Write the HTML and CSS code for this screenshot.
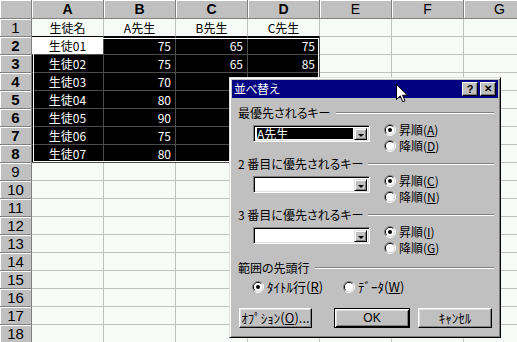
FILE: index.html
```html
<!DOCTYPE html>
<html lang="ja">
<head>
    <meta charset="UTF-8">
    <title>並べ替え</title>
    <link rel="stylesheet" href="styles.css">
</head>
<body>

<svg width="0" height="0" style="position:absolute">
    <symbol id="radio" viewBox="0 0 12 12">
        <path d="M2.1 9.9A5.5 5.5 0 0 1 9.9 2.1" fill="none" stroke="#808080"/>
        <path d="M9.9 2.1A5.5 5.5 0 0 1 2.1 9.9" fill="none" stroke="#fff"/>
        <path d="M2.8 9.2A4.5 4.5 0 0 1 9.2 2.8" fill="none" stroke="#000"/>
        <path d="M9.2 2.8A4.5 4.5 0 0 1 2.8 9.2" fill="none" stroke="#dfdfdf"/>
        <circle cx="6" cy="6" r="4" fill="#fff"/>
    </symbol>
    <symbol id="radio-on" viewBox="0 0 12 12">
        <use href="#radio"/>
        <circle cx="6" cy="6" r="2" fill="#000"/>
    </symbol>
</svg>

<div class="sheet">
    <div class="grid">
        <div class="head"></div><div class="head on">A</div><div class="head on">B</div><div class="head on">C</div><div class="head on">D</div><div class="head">E</div><div class="head">F</div><div class="head">G</div>

        <div class="head rh">1</div><div class="cell c top">生徒名</div><div class="cell c top">A先生</div><div class="cell c top">B先生</div><div class="cell c top">C先生</div><div class="cell"></div><div class="cell"></div><div class="cell"></div>
        <div class="head rh on">2</div><div class="cell c hl active">生徒01</div><div class="cell n hl">75</div><div class="cell n hl">65</div><div class="cell n hl">75</div><div class="cell"></div><div class="cell"></div><div class="cell"></div>
        <div class="head rh on">3</div><div class="cell c hl">生徒02</div><div class="cell n hl">75</div><div class="cell n hl">65</div><div class="cell n hl">85</div><div class="cell"></div><div class="cell"></div><div class="cell"></div>
        <div class="head rh on">4</div><div class="cell c hl">生徒03</div><div class="cell n hl">70</div><div class="cell n hl"></div><div class="cell n hl"></div><div class="cell"></div><div class="cell"></div><div class="cell"></div>
        <div class="head rh on">5</div><div class="cell c hl">生徒04</div><div class="cell n hl">80</div><div class="cell n hl"></div><div class="cell n hl"></div><div class="cell"></div><div class="cell"></div><div class="cell"></div>
        <div class="head rh on">6</div><div class="cell c hl">生徒05</div><div class="cell n hl">90</div><div class="cell n hl"></div><div class="cell n hl"></div><div class="cell"></div><div class="cell"></div><div class="cell"></div>
        <div class="head rh on">7</div><div class="cell c hl">生徒06</div><div class="cell n hl">75</div><div class="cell n hl"></div><div class="cell n hl"></div><div class="cell"></div><div class="cell"></div><div class="cell"></div>
        <div class="head rh on">8</div><div class="cell c hl">生徒07</div><div class="cell n hl">80</div><div class="cell n hl"></div><div class="cell n hl"></div><div class="cell"></div><div class="cell"></div><div class="cell"></div>
        <div class="head rh">9</div><div class="cell"></div><div class="cell"></div><div class="cell"></div><div class="cell"></div><div class="cell"></div><div class="cell"></div><div class="cell"></div>
        <div class="head rh">10</div><div class="cell"></div><div class="cell"></div><div class="cell"></div><div class="cell"></div><div class="cell"></div><div class="cell"></div><div class="cell"></div>
        <div class="head rh">11</div><div class="cell"></div><div class="cell"></div><div class="cell"></div><div class="cell"></div><div class="cell"></div><div class="cell"></div><div class="cell"></div>
        <div class="head rh">12</div><div class="cell"></div><div class="cell"></div><div class="cell"></div><div class="cell"></div><div class="cell"></div><div class="cell"></div><div class="cell"></div>
        <div class="head rh">13</div><div class="cell"></div><div class="cell"></div><div class="cell"></div><div class="cell"></div><div class="cell"></div><div class="cell"></div><div class="cell"></div>
        <div class="head rh">14</div><div class="cell"></div><div class="cell"></div><div class="cell"></div><div class="cell"></div><div class="cell"></div><div class="cell"></div><div class="cell"></div>
        <div class="head rh">15</div><div class="cell"></div><div class="cell"></div><div class="cell"></div><div class="cell"></div><div class="cell"></div><div class="cell"></div><div class="cell"></div>
        <div class="head rh">16</div><div class="cell"></div><div class="cell"></div><div class="cell"></div><div class="cell"></div><div class="cell"></div><div class="cell"></div><div class="cell"></div>
        <div class="head rh">17</div><div class="cell"></div><div class="cell"></div><div class="cell"></div><div class="cell"></div><div class="cell"></div><div class="cell"></div><div class="cell"></div>
        <div class="head rh">18</div><div class="cell"></div><div class="cell"></div><div class="cell"></div><div class="cell"></div><div class="cell"></div><div class="cell"></div><div class="cell"></div>
    </div>

    <!-- 選択範囲の枠 -->
    <div class="sel-frame"></div>

    <div class="dialog">
        <div class="titlebar">
            <span class="title">並べ替え</span>
            <span class="tbtn">?</span>
            <span class="tbtn close">✕</span>
        </div>

        <div class="dbody">
            <div class="ghead"><span>最優先されるキー</span><i></i></div>
            <div class="keyrow">
                <div class="combo"><span class="ctext"><b>A先生</b></span><span class="drop"></span></div>
                <div class="radios">
                    <div class="radio"><svg><use href="#radio-on"/></svg>昇順(<u>A</u>)</div>
                    <div class="radio"><svg><use href="#radio"/></svg>降順(<u>D</u>)</div>
                </div>
            </div>

            <div class="ghead"><span>2 番目に優先されるキー</span><i></i></div>
            <div class="keyrow">
                <div class="combo"><span class="ctext"></span><span class="drop"></span></div>
                <div class="radios">
                    <div class="radio"><svg><use href="#radio-on"/></svg>昇順(<u>C</u>)</div>
                    <div class="radio"><svg><use href="#radio"/></svg>降順(<u>N</u>)</div>
                </div>
            </div>

            <div class="ghead"><span>3 番目に優先されるキー</span><i></i></div>
            <div class="keyrow">
                <div class="combo"><span class="ctext"></span><span class="drop"></span></div>
                <div class="radios">
                    <div class="radio"><svg><use href="#radio-on"/></svg>昇順(<u>I</u>)</div>
                    <div class="radio"><svg><use href="#radio"/></svg>降順(<u>G</u>)</div>
                </div>
            </div>

            <div class="ghead range"><span>範囲の先頭行</span><i></i></div>
            <div class="rangerow">
                <div class="radio"><svg><use href="#radio-on"/></svg>ﾀｲﾄﾙ行(<u>R</u>)</div>
                <div class="radio data"><svg><use href="#radio"/></svg>ﾃﾞｰﾀ(<u>W</u>)</div>
            </div>

            <div class="buttons">
                <span class="btn opt">ｵﾌﾟｼｮﾝ(<u>O</u>)...</span>
                <span class="btn ok">OK</span>
                <span class="btn cancel">ｷｬﾝｾﾙ</span>
            </div>
        </div>
    </div>

    <svg class="cursor" width="13" height="20" viewBox="0 0 13 20">
        <path d="M0.5 0.5V15.5L4.3 11.9L6.8 17.8L9 16.9L6.6 11.2H11.5Z" fill="#fff" stroke="#000"/>
    </svg>
</div>

</body>
</html>
```
FILE: styles.css
```css
body {
    margin: 0;
    font-family: "Noto Sans CJK JP", sans-serif;
    font-size: 12px;
    background-color: #f7fbf7;
}

.sheet {
    position: relative;
    width: 517px;
    height: 342px;
    overflow: hidden;
    background-color: #f7fbf7;
}

.grid {
    display: grid;
    grid-template-columns: 32px repeat(7, 72px);
    grid-template-rows: 19px repeat(18, 18px);
    width: 536px;
}

.grid > div {
    box-sizing: border-box;
    border-right: 1px solid #c0c0c0;
    border-bottom: 1px solid #c0c0c0;
    white-space: nowrap;
    overflow: hidden;
    line-height: 17px;
}

.head {
    background-color: #c0c0c0;
    border-right-color: #808080 !important;
    border-bottom-color: #808080 !important;
    box-shadow: inset 1px 1px 0 #fff;
    text-align: center;
    font-family: "Liberation Sans", sans-serif;
    font-size: 14px;
    line-height: 18px !important;
    color: #000;
}

.head.rh {
    font-size: 15px;
}

.head.on {
    font-weight: bold;
}

.cell {
    color: #000;
}

.cell.c {
    text-align: center;
}

.cell.n {
    text-align: right;
    padding-right: 4px;
}

.cell.top {
    border-bottom-color: #000 !important;
}

.cell.hl {
    background-color: #000;
    color: #fff;
    border-color: #4c4c4c;
}

.cell.hl.active {
    background-color: #fff;
    color: #000;
}

/* 選択範囲の白い内枠 */
.sel-frame {
    position: absolute;
    left: 33px;
    top: 38px;
    width: 284px;
    height: 122px;
    border: 1px solid #fff;
    pointer-events: none;
}

/* ダイアログ */
.dialog {
    position: absolute;
    left: 229px;
    top: 77px;
    width: 272px;
    height: 261px;
    box-sizing: border-box;
    padding: 2px;
    background-color: #c0c0c0;
    border: 1px solid;
    border-color: #dfdfdf #000 #000 #dfdfdf;
    box-shadow: inset 1px 1px 0 #fff, inset -1px -1px 0 #808080;
}

.titlebar {
    display: flex;
    align-items: center;
    height: 18px;
    padding: 0 2px;
    background-color: #000080;
    color: #fff;
}

.title {
    flex: 1;
    line-height: 18px;
    letter-spacing: -0.5px;
}

.tbtn {
    width: 16px;
    height: 14px;
    box-sizing: border-box;
    margin-left: 2px;
    background-color: #c0c0c0;
    border: 1px solid;
    border-color: #fff #000 #000 #fff;
    box-shadow: inset -1px -1px 0 #808080;
    color: #000;
    font-family: "Liberation Sans", sans-serif;
    font-weight: bold;
    font-size: 11px;
    line-height: 12px;
    text-align: center;
}

.tbtn.close {
    font-size: 10px;
}

.dbody {
    padding: 8px 4px 0 6px;
    color: #000;
}

.ghead {
    display: flex;
    align-items: center;
    height: 14px;
    line-height: 14px;
    font-feature-settings: "palt";
}

.ghead i {
    flex: 1;
    height: 0;
    margin-left: 5px;
    border-top: 1px solid #808080;
    border-bottom: 1px solid #fff;
}

.keyrow {
    display: flex;
    height: 32px;
    margin: 2px 0 3px;
    padding-left: 15px;
}

.combo {
    display: flex;
    width: 117px;
    height: 17px;
    margin-top: 3px;
    box-sizing: border-box;
    padding: 2px;
    background-color: #fff;
    border: 1px solid;
    border-color: #808080 #fff #fff #808080;
    box-shadow: inset 1px 1px 0 #000, inset -1px -1px 0 #dfdfdf;
}

.ctext {
    flex: 1;
    display: flex;
    padding-left: 1px;
}

.ctext b {
    flex: 1;
    margin-right: 1px;
    background-color: #000;
    color: #fff;
    font-weight: normal;
    line-height: 12px;
}

.drop {
    position: relative;
    width: 13px;
    height: 12px;
    box-sizing: border-box;
    background-color: #c0c0c0;
    border: 1px solid;
    border-color: #dfdfdf #000 #000 #dfdfdf;
    box-shadow: inset 1px 1px 0 #fff, inset -1px -1px 0 #808080;
}

.drop::after {
    content: "";
    position: absolute;
    left: 3px;
    top: 5px;
    border-left: 3px solid transparent;
    border-right: 3px solid transparent;
    border-top: 3px solid #000;
}

.radios {
    margin-left: 14px;
}

.radio {
    display: flex;
    align-items: center;
    height: 16px;
    line-height: 16px;
}

.radio svg {
    width: 12px;
    height: 12px;
    margin-right: 3px;
}

.ghead.range {
    margin-top: 5px;
}

.rangerow {
    display: flex;
    height: 16px;
    margin-top: 4px;
    padding-left: 14px;
    font-size: 13px;
}

.radio.data {
    margin-left: 20px;
}

.buttons {
    display: flex;
    margin-top: 13px;
    padding-left: 1px;
}

.btn {
    height: 20px;
    box-sizing: border-box;
    background-color: #c0c0c0;
    border: 1px solid;
    border-color: #fff #000 #000 #fff;
    box-shadow: inset -1px -1px 0 #808080, inset 1px 1px 0 #dfdfdf;
    text-align: center;
    line-height: 18px;
    font-size: 13px;
}

.btn.opt {
    width: 73px;
}

.btn.ok {
    width: 76px;
    margin-left: 22px;
    border-color: #000;
    box-shadow: inset 1px 1px 0 #fff, inset -1px -1px 0 #000, inset 2px 2px 0 #dfdfdf, inset -2px -2px 0 #808080;
    font-family: "Liberation Sans", sans-serif;
    font-size: 12px;
}

.btn.cancel {
    width: 74px;
    margin-left: 8px;
}

.cursor {
    position: absolute;
    left: 396px;
    top: 84px;
}
```
